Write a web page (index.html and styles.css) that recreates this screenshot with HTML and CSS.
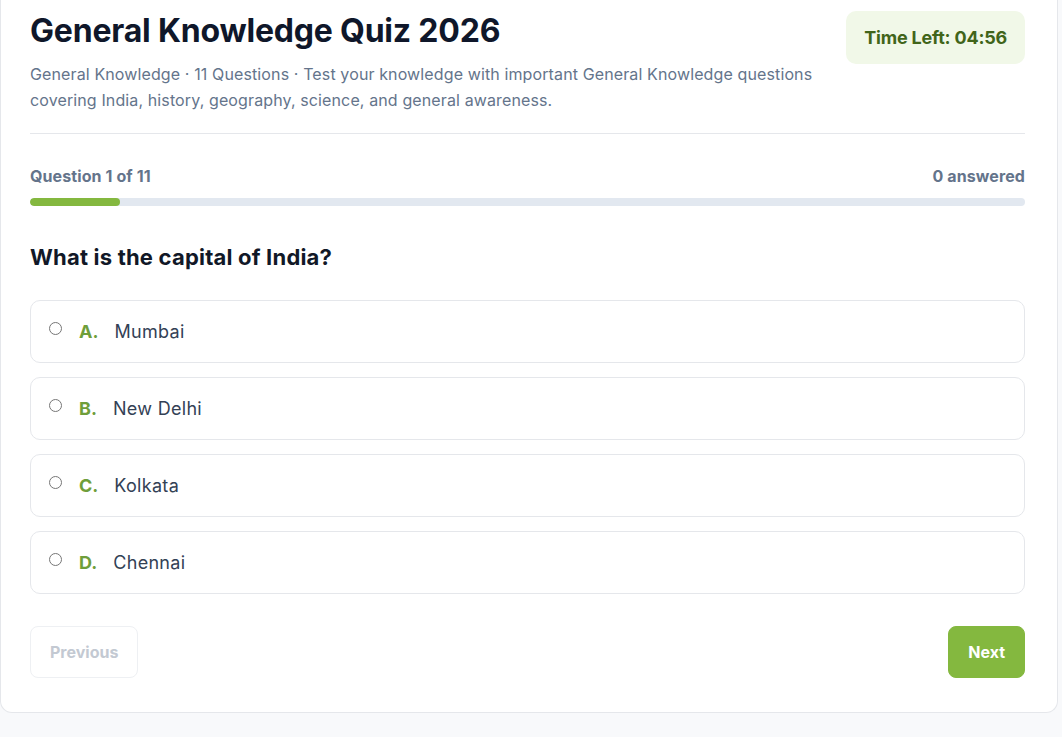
FILE: index.html
```html
<!DOCTYPE html>
<html lang="en">
<head>
<meta charset="utf-8">
<title>General Knowledge Quiz 2026</title>
<link rel="stylesheet" href="styles.css">
</head>
<body>
<main class="card">
  <header class="quiz-header">
    <div class="intro">
      <h1 class="title">General Knowledge Quiz 2026</h1>
      <p class="subtitle">General Knowledge · 11 Questions · Test your knowledge with important General Knowledge questions covering India, history, geography, science, and general awareness.</p>
    </div>
    <div class="timer">Time Left: 04:56</div>
  </header>

  <section class="progress-section">
    <div class="meta">
      <span>Question 1 of 11</span>
      <span>0 answered</span>
    </div>
    <div class="track"><div class="fill" style="width: 9.09%"></div></div>
  </section>

  <h2 class="question">What is the capital of India?</h2>

  <div class="options">
    <label class="option"><input type="radio" name="q1" class="radio"><span class="letter">A.</span><span class="text">Mumbai</span></label>
    <label class="option"><input type="radio" name="q1" class="radio"><span class="letter">B.</span><span class="text">New Delhi</span></label>
    <label class="option"><input type="radio" name="q1" class="radio"><span class="letter">C.</span><span class="text">Kolkata</span></label>
    <label class="option"><input type="radio" name="q1" class="radio"><span class="letter">D.</span><span class="text">Chennai</span></label>
  </div>

  <div class="nav">
    <button class="btn btn-prev" disabled>Previous</button>
    <button class="btn btn-next">Next</button>
  </div>
</main>
</body>
</html>
```

FILE: styles.css
```css
* { box-sizing: border-box; }

html, body {
  margin: 0;
  padding: 0;
  background: #f8f9fb;
  font-family: Inter, "Noto Sans", "Liberation Sans", sans-serif;
  color: #111827;
}

.card {
  width: 1058px;
  background: #ffffff;
  border: 1px solid #e5e7eb;
  border-top: 0;
  border-radius: 0 0 12px 12px;
  padding: 11px 32px 34px 29px;
}

.quiz-header {
  display: flex;
  justify-content: space-between;
  align-items: flex-start;
  gap: 24px;
  padding-bottom: 20px;
  border-bottom: 1px solid #e5e7eb;
}

.intro { flex: 1; min-width: 0; }

.title {
  margin: 0;
  font-size: 32px;
  line-height: 40px;
  font-weight: 700;
  color: #0f172a;
  letter-spacing: -0.2px;
}

.subtitle {
  margin: 10px 0 0;
  font-size: 16px;
  line-height: 26px;
  color: #64748b;
  letter-spacing: 0.12px;
}

.timer {
  flex: none;
  background: #f1f8e8;
  color: #41651a;
  font-weight: 700;
  font-size: 18px;
  line-height: 25px;
  letter-spacing: -0.2px;
  padding: 14px 18px;
  border-radius: 10px;
}

.progress-section { margin-top: 32px; }

.meta {
  display: flex;
  justify-content: space-between;
  font-size: 16px;
  line-height: 20px;
  font-weight: 700;
  color: #64748b;
  letter-spacing: 0.1px;
}

.track {
  margin-top: 12px;
  height: 8px;
  background: #e2e8f0;
  border-radius: 4px;
  overflow: hidden;
}

.fill {
  height: 100%;
  background: #84b83f;
  border-radius: 4px;
}

.question {
  margin: 36px 0 0;
  font-size: 22px;
  line-height: 30px;
  font-weight: 700;
  color: #111827;
  letter-spacing: 0.2px;
}

.options {
  margin-top: 28px;
  display: flex;
  flex-direction: column;
  gap: 14px;
}

.option {
  display: flex;
  align-items: flex-start;
  padding: 17px 18px;
  border: 1px solid #e5e7eb;
  border-radius: 10px;
  font-size: 18px;
  line-height: 27px;
  cursor: pointer;
}

.radio {
  width: 13px;
  height: 13px;
  margin: 4px 17px 0 0;
  flex: none;
}

.letter {
  font-weight: 700;
  color: #6f9e3a;
  margin-right: 16px;
}

.text {
  color: #334155;
  letter-spacing: 0.3px;
}

.nav {
  margin-top: 32px;
  display: flex;
  justify-content: space-between;
}

.btn {
  font-family: inherit;
  font-size: 16px;
  line-height: 22px;
  font-weight: 700;
  padding: 14px 19px 14px;
  border-radius: 8px;
}

.btn-prev {
  background: #ffffff;
  border: 1px solid #eef0f3;
  color: #c3c9d2;
}

.btn-next {
  background: #84b83f;
  border: 1px solid #84b83f;
  color: #ffffff;
}
```
